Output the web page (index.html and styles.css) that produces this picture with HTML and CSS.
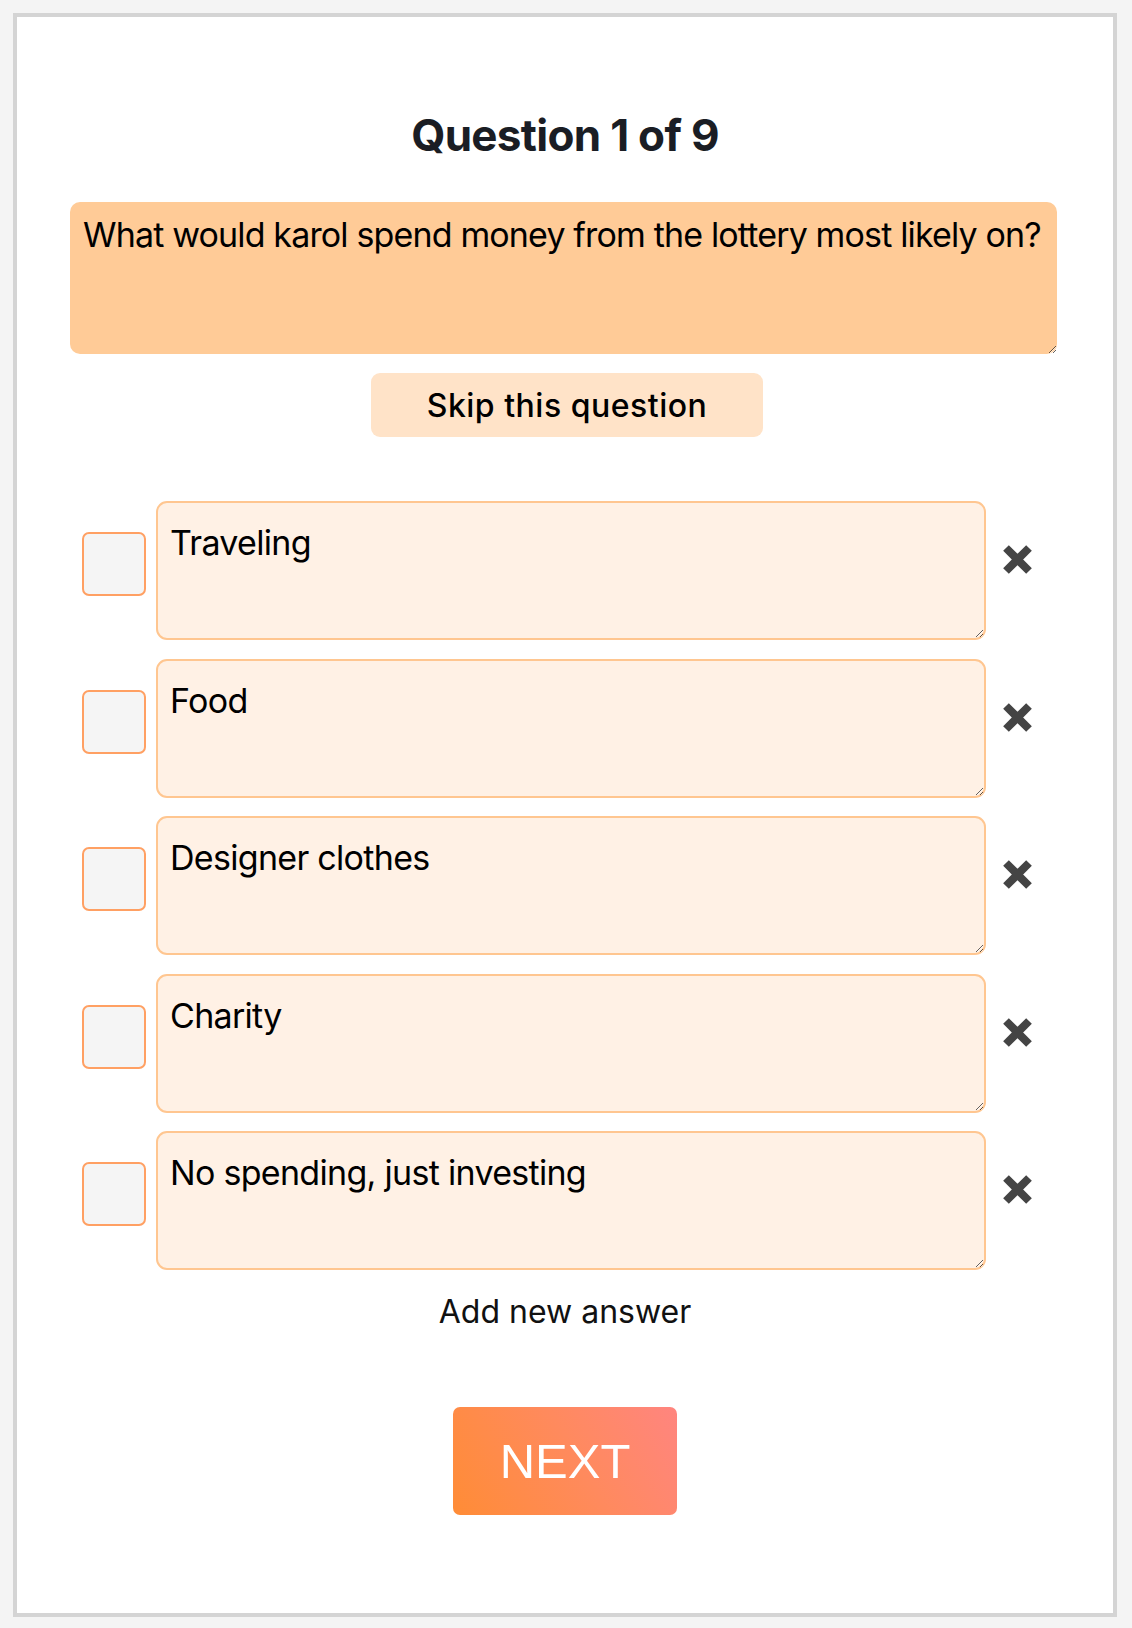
FILE: index.html
```html
<!DOCTYPE html>
<html lang="en">
<head>
<meta charset="utf-8">
<title>Question 1 of 9</title>
<link rel="stylesheet" href="styles.css">
</head>
<body>
<div class="card">
  <h1 class="title">Question 1 of 9</h1>
  <textarea class="question">What would karol spend money from the lottery most likely on?</textarea>
  <div class="skip-wrap"><button class="skip">Skip this question</button></div>
  <div class="answers">
    <div class="answer">
      <span class="check"></span>
      <textarea class="answer-text">Traveling</textarea>
      <svg class="remove" viewBox="0 0 31 31" width="31" height="31"><path d="M4 4L27 27M27 4L4 27" stroke="#444" stroke-width="8"/></svg>
    </div>
    <div class="answer">
      <span class="check"></span>
      <textarea class="answer-text">Food</textarea>
      <svg class="remove" viewBox="0 0 31 31" width="31" height="31"><path d="M4 4L27 27M27 4L4 27" stroke="#444" stroke-width="8"/></svg>
    </div>
    <div class="answer">
      <span class="check"></span>
      <textarea class="answer-text">Designer clothes</textarea>
      <svg class="remove" viewBox="0 0 31 31" width="31" height="31"><path d="M4 4L27 27M27 4L4 27" stroke="#444" stroke-width="8"/></svg>
    </div>
    <div class="answer">
      <span class="check"></span>
      <textarea class="answer-text">Charity</textarea>
      <svg class="remove" viewBox="0 0 31 31" width="31" height="31"><path d="M4 4L27 27M27 4L4 27" stroke="#444" stroke-width="8"/></svg>
    </div>
    <div class="answer">
      <span class="check"></span>
      <textarea class="answer-text">No spending, just investing</textarea>
      <svg class="remove" viewBox="0 0 31 31" width="31" height="31"><path d="M4 4L27 27M27 4L4 27" stroke="#444" stroke-width="8"/></svg>
    </div>
  </div>
  <div class="add">Add new answer</div>
  <div class="next-wrap"><button class="next">NEXT</button></div>
</div>
</body>
</html>
```
FILE: styles.css
```css
* { box-sizing: border-box; }
html, body { margin: 0; }
body {
  background: #f4f4f4;
  padding: 13px 15px 12px 13px;
  font-family: Inter, "Noto Sans", sans-serif;
  color: #111;
}
.card {
  background: #fff;
  border: 4px solid #d4d4d4;
  padding: 92px 0 98px 0;
}
.title {
  margin: 0;
  text-align: center;
  font-size: 44px;
  font-weight: 700;
  line-height: 53px;
  letter-spacing: -0.7px;
  color: #1a1d24;
}
.question {
  display: block;
  margin: 40px 0 0 53px;
  width: 987px;
  height: 152px;
  background: #ffcb97;
  border: none;
  border-radius: 10px;
  padding: 12px 2px 12px 13px;
  font-family: Inter, "Noto Sans", sans-serif;
  font-size: 34px;
  line-height: 41px;
  letter-spacing: -0.85px;
  color: #000;
  outline: none;
  overflow: hidden;
}
.skip-wrap {
  display: flex;
  justify-content: center;
  margin-top: 19px;
  padding-left: 4px;
}
.skip {
  width: 392px;
  height: 64px;
  background: #ffe3c8;
  border: none;
  border-radius: 9px;
  font-family: Inter, "Noto Sans", sans-serif;
  font-size: 32px;
  font-weight: 500;
  letter-spacing: 0.5px;
  color: #000;
}
.answers {
  margin: 64px 0 0 65px;
  display: flex;
  flex-direction: column;
  gap: 18.5px;
}
.answer {
  display: flex;
  align-items: flex-start;
}
.check {
  width: 64px;
  height: 64px;
  margin-top: 31px;
  background: #f5f5f5;
  border: 2px solid #ffa063;
  border-radius: 7px;
}
.answer-text {
  display: block;
  margin-left: 10px;
  width: 830px;
  height: 139px;
  background: #fff1e5;
  border: 2px solid #ffc690;
  border-radius: 11px;
  padding: 19px 12px;
  font-family: Inter, "Noto Sans", sans-serif;
  font-size: 34px;
  line-height: 41px;
  letter-spacing: -0.7px;
  color: #000;
  outline: none;
}
.remove {
  margin: 43px 0 0 16px;
  flex: none;
}
.add {
  margin-top: 23px;
  text-align: center;
  font-size: 32px;
  line-height: 38px;
  color: #111;
}
.next-wrap {
  display: flex;
  justify-content: center;
  margin-top: 76px;
}
.next {
  width: 224px;
  height: 108px;
  border: none;
  border-radius: 7px;
  background: linear-gradient(60deg, #ff8c36 0%, #ff8a5e 55%, #ff857f 100%);
  font-family: "Liberation Sans", Arial, sans-serif;
  font-size: 49px;
  color: #fff;
}
```
